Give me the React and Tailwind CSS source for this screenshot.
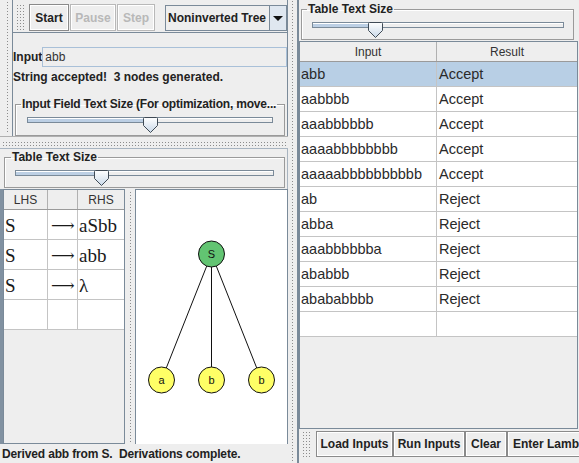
import React from 'react';

const dots =
  "bg-[image:radial-gradient(circle,#8c8c8c_0.7px,transparent_0.9px)] bg-[length:3px_3px]";

function Thumb() {
  return (
    <svg width="15" height="16" viewBox="0 0 15 16">
      <defs>
        <linearGradient id="thumbg" x1="0" y1="0" x2="0" y2="1">
          <stop offset="0" stopColor="#ffffff" />
          <stop offset="1" stopColor="#c9d8e8" />
        </linearGradient>
      </defs>
      <path
        d="M0.5 1.5 Q0.5 0.5 1.5 0.5 H13.5 Q14.5 0.5 14.5 1.5 V8.5 L7.5 15.5 L0.5 8.5 Z"
        fill="url(#thumbg)"
        stroke="#3f4a55"
      />
    </svg>
  );
}

function Slider({ track, fill, thumb }) {
  return (
    <div className={`relative h-[16px] ${track}`}>
      <div className="mt-[6px] flex h-[6px] border border-[#7a8a99]">
        <div className={`${fill} h-full border-t border-white bg-[#bccfe4]`} />
        <div className="h-full flex-1 border-t border-white bg-[#eeeeee]" />
      </div>
      <div className={`absolute top-0 ${thumb}`}>
        <Thumb />
      </div>
    </div>
  );
}

function Btn({ children, className = '', disabled }) {
  return (
    <div
      className={`flex shrink-0 items-center justify-center whitespace-nowrap border bg-[#eeeeee] text-[12px] font-bold shadow-[inset_1px_1px_0_#fff,inset_-1px_-1px_0_#fff] ${
        disabled ? 'border-[#b8b8b8] text-[#b8b8b8]' : 'border-[#8a8a8a] text-[#222]'
      } ${className}`}
    >
      {children}
    </div>
  );
}

const grammar = [
  ['S', 'aSbb'],
  ['S', 'abb'],
  ['S', 'λ'],
  ['', ''],
];

const results = [
  ['abb', 'Accept'],
  ['aabbbb', 'Accept'],
  ['aaabbbbbb', 'Accept'],
  ['aaaabbbbbbbb', 'Accept'],
  ['aaaaabbbbbbbbbb', 'Accept'],
  ['ab', 'Reject'],
  ['abba', 'Reject'],
  ['aaabbbbbba', 'Reject'],
  ['ababbb', 'Reject'],
  ['abababbbb', 'Reject'],
  ['', ''],
];

export default function App() {
  return (
    <div className="flex h-[463px] w-[579px] overflow-hidden bg-[#eeeeee] font-['Liberation_Sans',Arial,sans-serif] text-[12px] leading-[14px] text-[#222]">
      {/* left side */}
      <div className="flex w-[288px] shrink-0 flex-col">
        <div className="flex h-[137px] border-b border-[#b0b0b0]">
          <div className="w-[12px] pb-[2px] pl-[6px] pt-[1px]">
            <div className={`h-full w-[4px] ${dots}`} />
          </div>
          <div className="flex w-[276px] flex-col border-x border-[#7a8a99]">
            {/* toolbar */}
            <div className="flex h-[34px] items-start border-b border-[#7a8a99] pl-[3px] pt-[4px]">
              <div className={`h-[26px] w-[9px] ${dots}`} />
              <Btn className="ml-[4px] h-[27px] w-[40px]">Start</Btn>
              <Btn className="ml-[1px] h-[27px] w-[46px]" disabled>
                Pause
              </Btn>
              <Btn className="ml-[1px] h-[27px] w-[38px]" disabled>
                Step
              </Btn>
              <div className="ml-[10px] mt-[1px] flex h-[26px] w-[122px] shrink-0 border border-[#7a8a99] bg-[#eeeeee]">
                <div className="flex flex-1 items-center pl-[2px] font-bold whitespace-nowrap">
                  Noninverted Tree
                </div>
                <div className="flex w-[17px] items-center justify-center border-l border-[#7a8a99] bg-[#dfe7f0]">
                  <svg width="10" height="5" viewBox="0 0 10 5">
                    <polygon points="0,0 10,0 5,5" fill="#111" />
                  </svg>
                </div>
              </div>
            </div>
            {/* input row */}
            <div className="mt-[14px] flex h-[20px] items-stretch">
              <span className="flex items-center font-bold">Input</span>
              <div className="flex flex-1 items-center border border-[#a9c0d8] pl-[2px] text-[#333]">
                abb
              </div>
            </div>
            <div className="mt-[3px] whitespace-pre font-bold">String accepted!  3 nodes generated.</div>
            <fieldset className="ml-[2px] mt-[13px] w-[270px] border border-[#9a9a9a] pb-[2px] shadow-[inset_1px_1px_0_#fff]">
              <legend className="ml-[5px] whitespace-nowrap px-[1px] font-bold tracking-[-0.2px]">
                Input Field Text Size (For optimization, move...
              </legend>
              <div className="ml-[11px] mt-[4px]">
                <Slider track="w-[246px]" fill="w-[122px]" thumb="left-[116px]" />
              </div>
            </fieldset>
          </div>
        </div>
        {/* horizontal divider */}
        <div className="h-[11px] px-[2px] py-[4px]">
          <div className={`h-[5px] ${dots}`} />
        </div>
        {/* table text size */}
        <div className="h-[41px] border-r border-t border-[#a8b4c0] pt-[1px]">
          <fieldset className="ml-[4px] w-[281px] border border-[#9a9a9a] pb-[1px] shadow-[inset_1px_1px_0_#fff]">
            <legend className="ml-[6px] whitespace-nowrap px-[1px] font-bold">Table Text Size</legend>
            <div className="ml-[10px] mt-[3px]">
              <Slider track="w-[259px]" fill="w-[84px]" thumb="left-[79px]" />
            </div>
          </fieldset>
        </div>
        {/* grammar + tree */}
        <div className="flex h-[255px]">
          <div className="w-[3px] bg-[#8191a1]" />
          <div className="flex w-[122px] flex-col border border-[#7a8a99] bg-[#eeeeee]">
            <div className="flex h-[20px] border-b border-[#9a9a9a] text-[#333]">
              <div className="flex w-[44px] items-center justify-center border-r border-[#b0b0b0]">LHS</div>
              <div className="w-[30px] border-r border-[#b0b0b0]" />
              <div className="flex flex-1 items-center justify-center">RHS</div>
            </div>
            {grammar.map(([l, r], i) => (
              <div
                key={i}
                className="flex h-[30px] border-b border-[#c4c4c4] bg-white font-['Liberation_Serif','Times_New_Roman',serif] text-[19px] leading-[29px] text-[#1a1a1a]"
              >
                <div className="w-[44px] border-r border-[#c4c4c4] pl-[1px] pt-[1px]">{l}</div>
                <div className="w-[30px] overflow-hidden border-r border-[#c4c4c4] pl-[3px] pt-[1px] font-['DejaVu_Serif',serif] text-[16.5px]">
                  {l ? '⟶' : ''}
                </div>
                <div className="flex-1 pl-[1px] pt-[1px]">{r}</div>
              </div>
            ))}
          </div>
          <div className="w-[10px] py-[2px] pl-[4px]">
            <div className={`h-full w-[4px] ${dots}`} />
          </div>
          <div className="flex-1 border-x border-t border-[#7a8a99] bg-white">
            <svg width="151" height="254" viewBox="0 0 151 254" className="font-['Liberation_Sans',Arial,sans-serif]">
              <line x1="75.5" y1="64" x2="25.5" y2="190" stroke="#111" />
              <line x1="75.5" y1="64" x2="75.5" y2="190" stroke="#111" />
              <line x1="75.5" y1="64" x2="125.5" y2="190" stroke="#111" />
              <circle cx="75.5" cy="64" r="13" fill="#62c472" stroke="#111" />
              <circle cx="25.5" cy="190" r="13" fill="#ffff66" stroke="#111" />
              <circle cx="75.5" cy="190" r="13" fill="#ffff66" stroke="#111" />
              <circle cx="125.5" cy="190" r="13" fill="#ffff66" stroke="#111" />
              <text x="75.5" y="68" textAnchor="middle" fontSize="11" fill="#111">S</text>
              <text x="25.5" y="194" textAnchor="middle" fontSize="11" fill="#111">a</text>
              <text x="75.5" y="194" textAnchor="middle" fontSize="11" fill="#111">b</text>
              <text x="125.5" y="194" textAnchor="middle" fontSize="11" fill="#111">b</text>
            </svg>
          </div>
        </div>
        {/* status */}
        <div className="h-[19px] whitespace-pre pl-[2px] pt-[3px] font-bold tracking-[-0.15px]">
          Derived abb from S.  Derivations complete.
        </div>
      </div>

      {/* vertical divider */}
      <div className="w-[9px] shrink-0 pl-[3px] pr-[2px]">
        <div className={`h-full w-[4px] ${dots}`} />
      </div>

      {/* right side */}
      <div className="flex w-[282px] shrink-0 flex-col border-l-2 border-[#7a8a99]">
        <div className="h-[41px] pt-[2px]">
          <fieldset className="ml-[2px] w-[273px] border border-[#9a9a9a] pb-[1px] shadow-[inset_1px_1px_0_#fff]">
            <legend className="ml-[5px] whitespace-nowrap px-[1px] font-bold">Table Text Size</legend>
            <div className="ml-[10px] mt-[3px]">
              <Slider track="w-[252px]" fill="w-[62px]" thumb="left-[56px]" />
            </div>
          </fieldset>
        </div>
        <div className="flex h-[388px] w-[279px] flex-col border border-[#7a8a99] bg-[#eeeeee]">
          <div className="flex h-[20px] shrink-0 border-b border-[#9a9a9a] text-[#333]">
            <div className="flex w-[137px] items-center justify-center border-r border-[#b0b0b0]">Input</div>
            <div className="flex flex-1 items-center justify-center">Result</div>
          </div>
          {results.map(([a, b], i) => (
            <div
              key={i}
              className={`flex h-[25px] shrink-0 border-b border-[#c4c4c4] text-[14.5px] leading-[24px] text-[#2a2a2a] ${
                i === 0 ? 'bg-[#b8cfe5]' : 'bg-white'
              }`}
            >
              <div className="w-[137px] border-r border-[#c4c4c4] pl-[1px]">{a}</div>
              <div className="flex-1 pl-[2px]">{b}</div>
            </div>
          ))}
        </div>
        <div className="flex h-[34px] items-start overflow-hidden pl-[3px] pt-[2px]">
          <div className={`h-[26px] w-[10px] shrink-0 ${dots}`} />
          <Btn className="ml-[4px] h-[26px] w-[77px]">Load Inputs</Btn>
          <Btn className="ml-[0px] h-[26px] w-[72px]">Run Inputs</Btn>
          <Btn className="h-[26px] w-[42px]">Clear</Btn>
          <Btn className="h-[26px] w-[90px] justify-start pl-[5px]">Enter Lambda</Btn>
        </div>
      </div>
    </div>
  );
}
